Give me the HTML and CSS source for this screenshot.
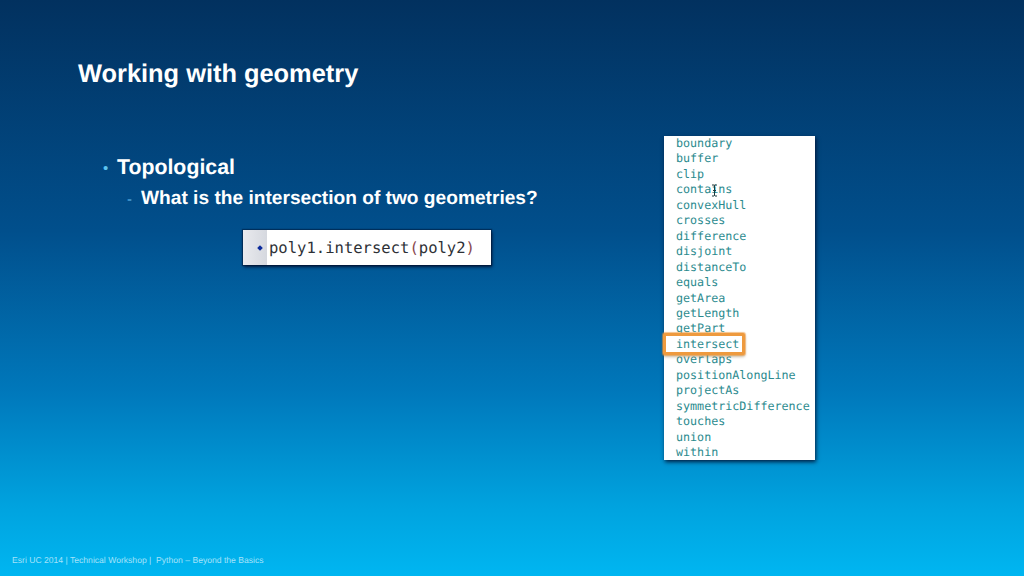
FILE: index.html
```html
<!DOCTYPE html>
<html lang="en">
<head>
<meta charset="utf-8">
<title>Working with geometry</title>
<link rel="stylesheet" href="styles.css">
</head>
<body>
<main class="slide">
  <h1 class="title">Working with geometry</h1>
  <div class="content">
    <section class="text">
      <div class="level1"><span class="dot">•</span><span>Topological</span></div>
      <div class="level2"><span class="dash">-</span><span>What is the intersection of two geometries?</span></div>
      <div class="code">
        <div class="gutter"><span class="marker"></span></div>
        <div class="codeline">poly1.intersect<span class="paren">(</span>poly2<span class="paren">)</span></div>
      </div>
    </section>
    <ul class="methods">
      <li>boundary</li>
      <li>buffer</li>
      <li>clip</li>
      <li class="cursor-row">contains
        <svg class="ibeam" width="7" height="13" viewBox="0 0 7 13"><path d="M1 1h2l.5.6.5-.6h2M3.5 1.500v10M1 12h2l.5-.6.5.6h2M2 6.500h3" fill="none" stroke="#1d3a3e" stroke-width="1"/></svg>
      </li>
      <li>convexHull</li>
      <li>crosses</li>
      <li>difference</li>
      <li>disjoint</li>
      <li>distanceTo</li>
      <li>equals</li>
      <li>getArea</li>
      <li>getLength</li>
      <li>getPart</li>
      <li class="selected">intersect</li>
      <li>overlaps</li>
      <li>positionAlongLine</li>
      <li>projectAs</li>
      <li>symmetricDifference</li>
      <li>touches</li>
      <li>union</li>
      <li>within</li>
    </ul>
  </div>
  <footer class="footer">Esri UC 2014 | Technical Workshop |&nbsp; Python – Beyond the Basics</footer>
</main>
</body>
</html>
```
FILE: styles.css
```css
*, *::before { box-sizing: border-box; }
html, body { margin: 0; padding: 0; }
body {
  width: 1024px;
  height: 576px;
  overflow: hidden;
  font-family: "Liberation Sans", Arial, sans-serif;
  text-rendering: geometricPrecision;
}

.slide {
  width: 1024px;
  height: 576px;
  display: flex;
  flex-direction: column;
  color: #fff;
  background: linear-gradient(180deg, #02315f 0%, #014f8c 40%, #0078bb 68%, #00a3df 88%, #00b6f1 100%);
}

.title {
  margin: 0;
  padding: 60px 0 0 78px;
  height: 136px;
  font-size: 25.400px;
  line-height: 29px;
  font-weight: 700;
}

.content {
  display: flex;
  flex: 1;
  min-height: 0;
  justify-content: space-between;
  padding-right: 209px;
}

.text { padding: 19px 0 0 103px; }

.level1 {
  display: flex;
  font-size: 21.300px;
  line-height: 25px;
  font-weight: 700;
}
.dot {
  width: 14px;
  padding-top: 2px;
  font-size: 15px;
  line-height: 23px;
  font-weight: 400;
  color: #5cc4f0;
}
.level2 {
  display: flex;
  margin: 8px 0 0 24px;
  font-size: 19.150px;
  line-height: 22px;
  font-weight: 700;
}
.dash {
  width: 14px;
  padding-top: 1px;
  font-size: 15px;
  line-height: 21px;
  font-weight: 400;
  color: #5ab0e4;
}

.code {
  display: flex;
  width: 248px;
  height: 35px;
  margin: 20px 0 0 140px;
  background: #fff;
  box-shadow: 0 0 1px 1px rgba(0, 20, 50, .5), 1px 2px 3px rgba(0, 10, 40, .8);
}
.gutter {
  width: 24px;
  display: flex;
  align-items: center;
  justify-content: center;
  background: linear-gradient(90deg, #e9eaee, #d5d8df);
}
.marker {
  width: 4px;
  height: 4px;
  margin-left: 10px;
  background: #0b2a9c;
  transform: rotate(45deg);
}
.codeline {
  padding-left: 2px;
  font-family: "DejaVu Sans Mono", "Liberation Mono", monospace;
  font-size: 15.550px;
  line-height: 37px;
  color: #2d3036;
  white-space: nowrap;
}
.paren { color: #8a4a50; }

.methods {
  list-style: none;
  width: 151px;
  height: 324px;
  margin: 0;
  padding: 0 0 0 12px;
  background: #fff;
  box-shadow: 1px 2px 4px rgba(0, 10, 40, .85);
  font-family: "DejaVu Sans Mono", "Liberation Mono", monospace;
  font-size: 11.700px;
  line-height: 15.450px;
  color: #2b8a8e;
  white-space: nowrap;
}
.methods li { position: relative; }
.ibeam { position: absolute; left: 35px; top: 2px; }
.selected { z-index: 1; }
.selected::before {
  content: "";
  position: absolute;
  left: -13px;
  top: -4px;
  width: 82px;
  height: 22px;
  border: 3px solid #ee9a3e;
  border-radius: 2px;
  background: #fff;
  box-shadow: 0 0 1px 1px rgba(238, 154, 62, .6), 0 2px 3px rgba(120, 90, 40, .4);
  z-index: -1;
}

.footer {
  height: 30px;
  padding: 8px 0 0 12px;
  font-size: 8.600px;
  line-height: 12px;
  color: #a5e2fa;
}
```
